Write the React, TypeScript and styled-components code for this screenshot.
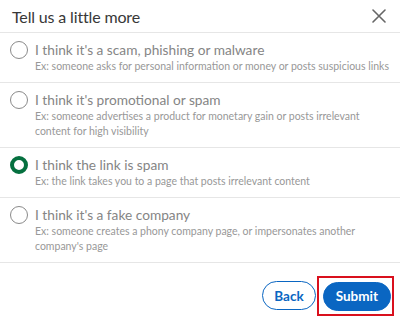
import React, { useState } from "react";
import styled, { createGlobalStyle } from "styled-components";

const GlobalStyle = createGlobalStyle`
  html, body {
    margin: 0;
    padding: 0;
    background: #fff;
  }
  body {
    font-family: Lato, "Open Sans", "Liberation Sans", sans-serif;
  }
`;

const reasons = [
  {
    id: "scam",
    label: "I think it's a scam, phishing or malware",
    hint: "Ex: someone asks for personal information or money or posts suspicious links",
  },
  {
    id: "promo",
    label: "I think it's promotional or spam",
    hint: "Ex: someone advertises a product for monetary gain or posts irrelevant content for high visibility",
  },
  {
    id: "link",
    label: "I think the link is spam",
    hint: "Ex: the link takes you to a page that posts irrelevant content",
  },
  {
    id: "fake",
    label: "I think it's a fake company",
    hint: "Ex: someone creates a phony company page, or impersonates another company's page",
  },
];

const Modal = styled.div`
  width: 400px;
  height: 324px;
  background: #fff;
  display: flex;
  flex-direction: column;
`;

const Header = styled.div`
  height: 32px;
  display: flex;
  align-items: center;
  justify-content: space-between;
  padding: 0 12px;
  border-bottom: 1px solid #e6e6e6;
`;

const Title = styled.h2`
  margin: 0;
  font-size: 16px;
  font-weight: 400;
  color: #383838;
  letter-spacing: -0.15px;
`;

const CloseButton = styled.button`
  border: 0;
  background: none;
  padding: 0;
  width: 16px;
  height: 16px;
  display: flex;
  align-items: center;
  justify-content: center;
  cursor: pointer;
  margin-right: 1px;
`;

const List = styled.div`
  display: flex;
  flex-direction: column;
`;

const Row = styled.label`
  display: flex;
  align-items: flex-start;
  gap: 7px;
  padding: 8px 10px 8px 10px;
  border-bottom: 1px solid #e6e6e6;
  cursor: pointer;
`;

const Radio = styled.span<{ $checked: boolean }>`
  flex: none;
  box-sizing: border-box;
  width: 18px;
  height: 18px;
  border-radius: 50%;
  border: ${(p) => (p.$checked ? "4.5px solid #05703f" : "1.3px solid #8a8a8a")};
  background: #fff;
`;

const Texts = styled.div`
  display: flex;
  flex-direction: column;
`;

const Label = styled.span`
  font-size: 13.7px;
  line-height: 18px;
  color: #858585;
`;

const Hint = styled.span`
  font-size: 10.5px;
  line-height: 15px;
  color: #989898;
`;

const Footer = styled.div`
  flex: 1;
  display: flex;
  justify-content: flex-end;
  align-items: center;
  gap: 1px;
  padding: 4px 6px 0 0;
`;

const Pill = styled.button<{ $primary?: boolean }>`
  height: 29px;
  border-radius: 15px;
  font-family: inherit;
  font-size: 13.5px;
  font-weight: 700;
  cursor: pointer;
  box-sizing: border-box;
  padding: ${(p) => (p.$primary ? "0 12px" : "0 11px")};
  border: 1px solid #0a66c2;
  background: ${(p) => (p.$primary ? "#0a66c2" : "#fff")};
  color: ${(p) => (p.$primary ? "#fff" : "#0a66c2")};
`;

const Highlight = styled.span`
  display: inline-flex;
  padding: 4px 1px 3px 4px;
  border: 2px solid #d9101d;
`;

export default function App() {
  const [selected, setSelected] = useState("link");
  return (
    <>
      <GlobalStyle />
      <Modal>
        <Header>
          <Title>Tell us a little more</Title>
          <CloseButton aria-label="Close">
            <svg width="14" height="14" viewBox="0 0 14 14">
              <path d="M1 1 L13 13 M13 1 L1 13" stroke="#666" strokeWidth="1.6" strokeLinecap="round" />
            </svg>
          </CloseButton>
        </Header>
        <List>
          {reasons.map((r) => (
            <Row key={r.id} onClick={() => setSelected(r.id)}>
              <Radio $checked={selected === r.id} />
              <Texts>
                <Label>{r.label}</Label>
                <Hint>{r.hint}</Hint>
              </Texts>
            </Row>
          ))}
        </List>
        <Footer>
          <Pill>Back</Pill>
          <Highlight>
            <Pill $primary>Submit</Pill>
          </Highlight>
        </Footer>
      </Modal>
    </>
  );
}
